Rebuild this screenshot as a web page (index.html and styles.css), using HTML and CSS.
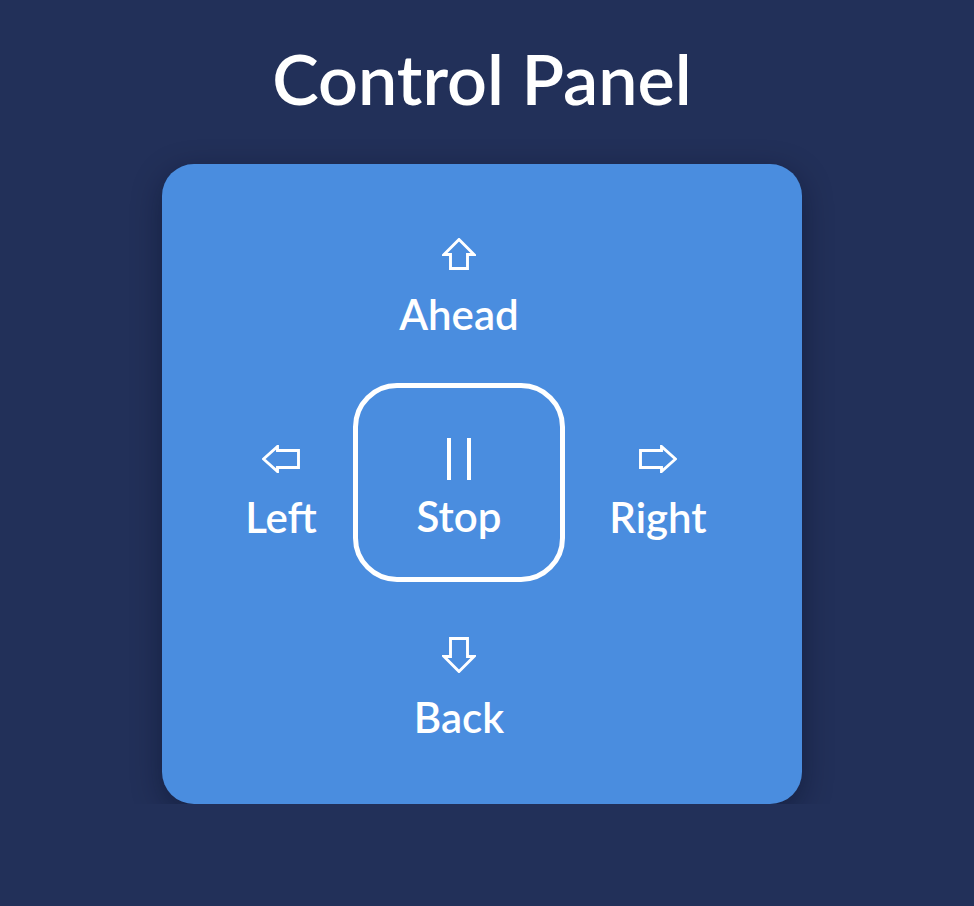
FILE: index.html
```html
<!DOCTYPE html>
<html lang="en">
<head>
<meta charset="utf-8">
<title>Control Panel</title>
<link rel="stylesheet" href="styles.css">
</head>
<body>
<main class="page">
  <h1 class="title">Control Panel</h1>
  <section class="panel">
    <div class="cell cell-up">
      <button class="ctrl">
        <svg class="arrow arrow-v" viewBox="0 0 34 32"><path d="M17 1.5 L32 16.5 L25.5 16.5 L25.5 30.5 L8.5 30.5 L8.5 16.5 L2 16.5 Z"/></svg>
        <span class="label">Ahead</span>
      </button>
    </div>
    <div class="cell cell-left">
      <button class="ctrl">
        <svg class="arrow arrow-h" viewBox="0 0 38 28"><path d="M1.5 14 L15.5 1.5 L15.5 5.5 L36.5 5.5 L36.5 22.5 L15.5 22.5 L15.5 26.5 Z"/></svg>
        <span class="label">Left</span>
      </button>
    </div>
    <div class="cell cell-center">
      <button class="ctrl stop">
        <span class="pause"><i></i><i></i></span>
        <span class="label">Stop</span>
      </button>
    </div>
    <div class="cell cell-right">
      <button class="ctrl">
        <svg class="arrow arrow-h" viewBox="0 0 38 28"><path d="M36.5 14 L22.5 1.5 L22.5 5.5 L1.5 5.5 L1.5 22.5 L22.5 22.5 L22.5 26.5 Z"/></svg>
        <span class="label">Right</span>
      </button>
    </div>
    <div class="cell cell-down">
      <button class="ctrl">
        <svg class="arrow arrow-v arrow-down" viewBox="0 0 34 36"><path d="M17 34.5 L32 19.5 L25.5 19.5 L25.5 1.5 L8.5 1.5 L8.5 19.5 L2 19.5 Z"/></svg>
        <span class="label">Back</span>
      </button>
    </div>
  </section>
</main>
</body>
</html>
```
FILE: styles.css
```css
html, body {
  margin: 0;
  padding: 0;
  background: #223059;
  min-height: 100%;
}

body {
  font-family: "Lato", "Open Sans", sans-serif;
  color: #ffffff;
}

.page {
  width: 964px;
  display: flex;
  flex-direction: column;
  align-items: center;
  padding-top: 40px;
}

.title {
  margin: 0 0 48px 0;
  font-size: 70px;
  line-height: 76px;
  font-weight: 600;
  color: #ffffff;
}

.panel {
  width: 640px;
  height: 640px;
  box-sizing: border-box;
  background: #4a8ddf;
  border-radius: 32px;
  box-shadow: 0 8px 30px rgba(6, 10, 30, 0.4);
  display: grid;
  grid-template-columns: 144px 212px 186px;
  grid-template-rows: 191px 199px 213px;
  padding: 28px 0 0 47px;
}

.cell {
  display: flex;
  align-items: center;
  justify-content: center;
}

.cell-up { grid-column: 2; grid-row: 1; }
.cell-left { grid-column: 1; grid-row: 2; padding-top: 20px; }
.cell-center { grid-column: 2; grid-row: 2; }
.cell-right { grid-column: 3; grid-row: 2; padding-top: 20px; }
.cell-down { grid-column: 2; grid-row: 3; }

.ctrl {
  background: none;
  border: none;
  padding: 0;
  color: #ffffff;
  font-family: inherit;
  display: flex;
  flex-direction: column;
  align-items: center;
  gap: 21px;
  cursor: pointer;
}

.label {
  font-size: 42px;
  line-height: 46px;
  font-weight: 600;
}

.arrow {
  fill: none;
  stroke: #ffffff;
  stroke-width: 2.9;
  stroke-linejoin: miter;
}

.arrow-v { width: 34px; height: 32px; }
.arrow-down { height: 36px; }
.arrow-h { width: 38px; height: 28px; }

.stop {
  width: 212px;
  height: 199px;
  box-sizing: border-box;
  border: 5px solid #ffffff;
  border-radius: 44px;
  justify-content: center;
  gap: 13px;
  padding-top: 12px;
}

.pause {
  display: flex;
  gap: 16px;
  height: 42px;
}

.pause i {
  width: 4px;
  height: 42px;
  background: #ffffff;
}
```
